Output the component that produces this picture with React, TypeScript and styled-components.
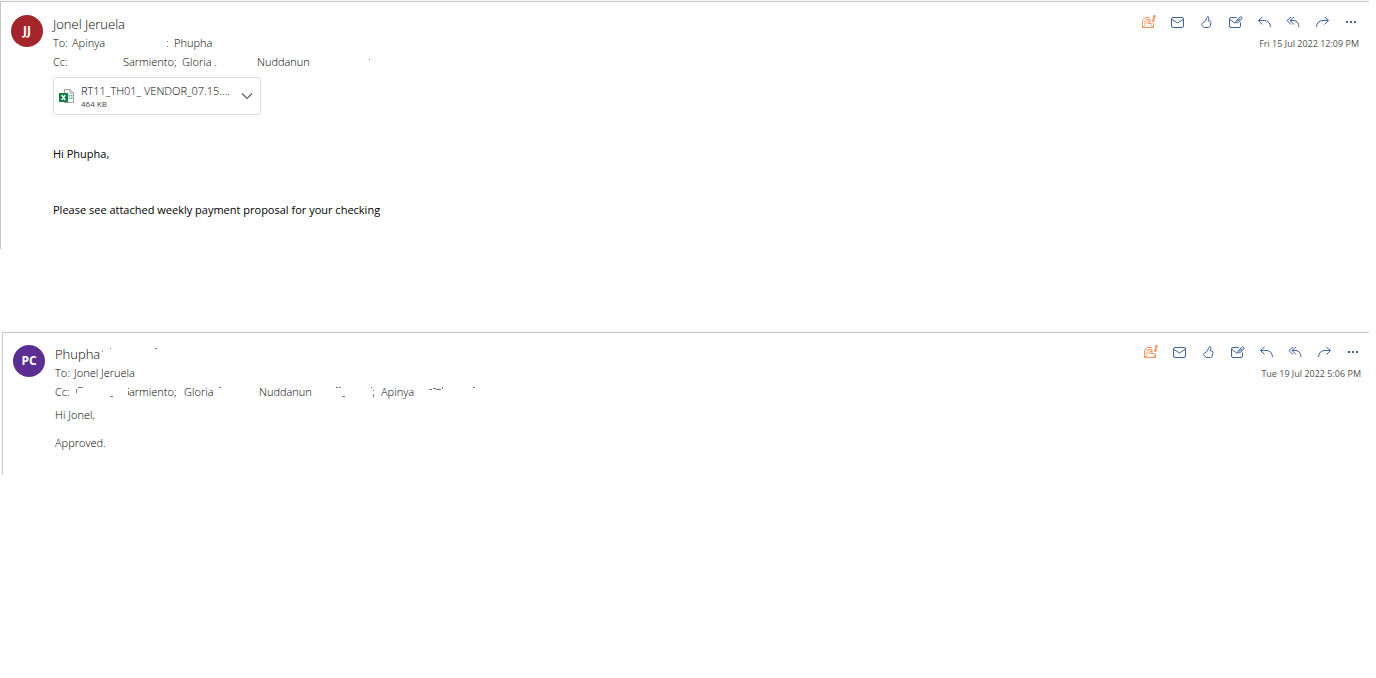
import React from "react";
import styled, { createGlobalStyle } from "styled-components";

const Global = createGlobalStyle`
  * { box-sizing: border-box; }
  body { margin: 0; background: #fff; color: #000; font-family: "Open Sans", "Noto Sans", sans-serif; }
`;

const Thread = styled.main`
  display: flex;
  flex-direction: column;
  gap: 83px;
  padding: 1px 7px 40px 0;
`;

const Message = styled.article<{ $indent: number; $top: number; $right: number; $bottom: number }>`
  display: grid;
  grid-template-columns: 32px minmax(0, 1fr) auto;
  column-gap: 10px;
  margin-left: ${(p) => p.$indent}px;
  padding: ${(p) => p.$top}px ${(p) => p.$right}px ${(p) => p.$bottom}px 10px;
  border-top: 1px solid #c8c8c8;
  border-left: 1px solid #c8c8c8;
  box-shadow: 0 -2px 0 #f8f8f8;
`;

const Avatar = styled.div<{ $color: string }>`
  width: 32px;
  height: 32px;
  margin-top: 1px;
  border-radius: 50%;
  background: ${(p) => p.$color};
  color: #fff;
  font-size: 12px;
  font-weight: 700;
  line-height: 32px;
  text-align: center;
`;

const Content = styled.div`
  min-width: 0;
  padding-top: 1px;
`;

const Sender = styled.h2`
  display: flex;
  margin: 0;
  font-size: 13px;
  font-weight: 300;
  line-height: 18px;
  white-space: pre;
`;

const Line = styled.div`
  display: flex;
  font-size: 11px;
  font-weight: 300;
  line-height: 19px;
  white-space: pre;
`;

const Cell = styled.span<{ $w?: number }>`
  flex: none;
  width: ${(p) => (p.$w ? `${p.$w}px` : "auto")};
`;

const MarkSvg = styled.svg`
  flex: none;
  display: block;
`;

const Attachment = styled.button`
  display: grid;
  grid-template-columns: 16px 154px 12px;
  align-items: center;
  column-gap: 6px;
  width: 208px;
  height: 38px;
  margin: 6px 0 0;
  padding: 0 5px;
  border: 1px solid #e1e1e1;
  border-radius: 3px;
  background: #fff;
  color: inherit;
  font-family: inherit;
  text-align: left;
`;

const FileName = styled.span`
  display: block;
  font-size: 11px;
  font-weight: 300;
  line-height: 14px;
  white-space: nowrap;
`;

const FileSize = styled.span`
  display: block;
  font-size: 8px;
  line-height: 11px;
  color: #484644;
`;

const Body = styled.div<{ $top: number; $gap: number; $weight: number }>`
  display: flex;
  flex-direction: column;
  gap: ${(p) => p.$gap}px;
  padding-top: ${(p) => p.$top}px;
  font-size: 11px;
  font-weight: ${(p) => p.$weight};
  line-height: 18px;
`;

const Paragraph = styled.p`
  margin: 0;
`;

const Side = styled.div`
  display: flex;
  flex-direction: column;
  align-items: flex-end;
`;

const Actions = styled.div`
  display: flex;
  gap: 13px;
`;

const Action = styled.button<{ $accent?: boolean }>`
  display: block;
  width: 16px;
  height: 16px;
  margin: 0;
  padding: 0;
  border: 0;
  background: none;
  color: ${(p) => (p.$accent ? "#f4915f" : "#41639f")};
  svg { display: block; fill: none; stroke: currentColor; }
`;

const Stamp = styled.time`
  margin-top: 6px;
  color: #55524f;
  font-size: 9px;
  line-height: 16px;
`;

const Mark = ({ w, d }: { w: number; d: string }) => (
  <MarkSvg width={w} height={18} viewBox={`0 0 ${w} 18`} aria-hidden="true">
    <path d={d} stroke="#7a7876" strokeWidth="1" fill="none" />
  </MarkSvg>
);

const icons: { label: string; accent?: boolean; art: React.ReactNode }[] = [
  {
    label: "Viva Insights",
    accent: true,
    art: (
      <>
        <path d="M10 3.500H5.500L2.500 6.500V13.500H13.500V9.500" />
        <path d="M2.500 13.500L5.500 11M13.500 13.500L11 11.500" />
        <path d="M5 10.500V7.500Q5 5.500 7 5.500H10V9Q10.500 11 12.500 9.500M10 7.500Q7.300 6.500 7.300 8.500T10 9.500" />
        <path d="M13 8L14 4" strokeWidth="2" />
        <circle cx="14.300" cy="2.500" r="1.400" fill="currentColor" stroke="none" />
      </>
    ),
  },
  {
    label: "Mark as unread",
    art: <><rect x="2.500" y="3.500" width="12" height="10" rx="1.500" /><path d="M3 5.500L8.500 9L14 5.500" /></>,
  },
  {
    label: "Like",
    art: <path d="M9.700 2.500Q8.300 4 7.500 7Q6 8.300 4.500 9Q3.300 9.500 3.500 10.500L5.200 12.800Q6 13.500 7 13.500H10.300Q11.700 13.500 12.200 12L13 8.300Q13 7 11.700 7H10.200Q11 5 10.800 3.500Q10.500 2.300 9.700 2.500Z" />,
  },
  {
    label: "Reply with note",
    art: <><path d="M9.500 3.500H4Q2.500 3.500 2.500 5V12Q2.500 13.500 4 13.500H12Q13.500 13.500 13.500 12V8.500M3 5.500L7.500 9L9.500 8" /><path d="M9.500 7L12.800 3.200Q13.800 2.300 14.700 3.200T14.600 5L11.600 8.300Q10.300 9.300 9.500 8.500T9.600 6.600L12.300 3.800M10.800 7.500L13.300 4.800" /></>,
  },
  { label: "Reply", art: <path d="M6.500 3L2.500 6.500L6.500 10.500M2.500 6.500H8Q14 6.500 14.500 13" /> },
  { label: "Reply all", art: <path d="M6 3L2 6.500L6 10.500M9 3L5 6.500L9 10.500M5 6.500H9Q13.500 7 14 13" /> },
  { label: "Forward", art: <path d="M10.500 3L14.500 6.500L10.500 10.500M14.500 6.500H9Q3 6.500 2.500 13" /> },
  {
    label: "More actions",
    art: <g fill="currentColor" stroke="none"><rect x="3" y="7" width="2" height="2" /><rect x="7" y="7" width="2" height="2" /><rect x="11" y="7" width="2" height="2" /></g>,
  },
];

const MessageSide = ({ date, iso }: { date: string; iso: string }) => (
  <Side>
    <Actions>
      {icons.map((i) => (
        <Action key={i.label} type="button" aria-label={i.label} $accent={i.accent}>
          <svg width="16" height="16" viewBox="0 0 16 16">{i.art}</svg>
        </Action>
      ))}
    </Actions>
    <Stamp dateTime={iso}>{date}</Stamp>
  </Side>
);

const ExcelIcon = () => (
  <svg width="16" height="16" viewBox="0 0 16 16" aria-hidden="true">
    <path d="M5.500 1.500H11L14.500 5V14.500H5.500Z M11 1.500V5H14.500" fill="#fff" stroke="#a19f9d" />
    <path d="M9.500 7h1.500v1.500H9.500zM12 7h1.500v1.500H12zM9.500 9.500h1.500v1.500H9.500zM12 9.500h1.500v1.500H12z" fill="#3fb886" />
    <rect x="0" y="5" width="9" height="9" fill="#107c41" />
    <path d="M2.700 7L6.300 12M6.300 7L2.700 12" stroke="#fff" strokeWidth="1.300" />
  </svg>
);

export default function App() {
  return (
    <>
      <Global />
      <Thread>
        <Message $indent={0} $top={12} $right={10} $bottom={30}>
          <Avatar $color="#a4262c">JJ</Avatar>
          <Content>
            <Sender>Jonel Jeruela</Sender>
            <Line>
              <Cell $w={19}>To:</Cell>
              <Cell $w={94}>Apinya</Cell>
              <Mark w={8} d="M1 8.500h1M1 13.500h1" />
              <Cell>Phupha</Cell>
            </Line>
            <Line>
              <Cell $w={70}>Cc:</Cell>
              <Cell $w={59}>Sarmiento;</Cell>
              <Cell $w={75}>Gloria .</Cell>
              <Cell $w={112}>Nuddanun</Cell>
              <Mark w={3} d="M0 7.500h1" />
            </Line>
            <Attachment type="button">
              <ExcelIcon />
              <span>
                <FileName>RT11_TH01_ VENDOR_07.15....</FileName>
                <FileSize>464 KB</FileSize>
              </span>
              <svg width="12" height="8" viewBox="0 0 12 8" aria-hidden="true">
                <path d="M1 1.500L6 6.500L11 1.500" fill="none" stroke="#605e5c" strokeWidth="1.200" />
              </svg>
            </Attachment>
            <Body $top={30} $gap={38} $weight={400}>
              <Paragraph>Hi Phupha,</Paragraph>
              <Paragraph>Please see attached weekly payment proposal for your checking</Paragraph>
            </Body>
          </Content>
          <MessageSide date="Fri 15 Jul 2022 12:09 PM" iso="2022-07-15T12:09" />
        </Message>

        <Message $indent={2} $top={11} $right={8} $bottom={23}>
          <Avatar $color="#5c2e91">PC</Avatar>
          <Content>
            <Sender>
              <Cell $w={47}>Phupha</Cell>
              <Mark w={57} d="M0 6.500h1M8 3.500h1M53 3.500h2" />
            </Sender>
            <Line>
              <Cell $w={19}>To:</Cell>
              <Cell>Jonel Jeruela</Cell>
            </Line>
            <Line>
              <Cell $w={20}>Cc:</Cell>
              <Mark w={54} d="M1.500 7v4M3 5.500h5M35 14.500h3M53.500 6v1M53.500 9v4" />
              <Cell $w={55}>armiento;</Cell>
              <Cell $w={35}>Gloria</Cell>
              <Mark w={40} d="M0 5.500h2" />
              <Cell $w={76}>Nuddanun</Cell>
              <Mark w={46} d="M1 5.500h2M4 5.500h2M7 14.500h3M36 5.500h1M38.500 8v1M38.500 12v3" />
              <Cell $w={48}>Apinya</Cell>
              <Mark w={48} d="M0 7.500h3M4 6.500h3M7 7.500h5M13.500 5v2M44 5.500h2" />
            </Line>
            <Body $top={5} $gap={10} $weight={300}>
              <Paragraph>Hi Jonel,</Paragraph>
              <Paragraph>Approved.</Paragraph>
            </Body>
          </Content>
          <MessageSide date="Tue 19 Jul 2022 5:06 PM" iso="2022-07-19T17:06" />
        </Message>
      </Thread>
    </>
  );
}
